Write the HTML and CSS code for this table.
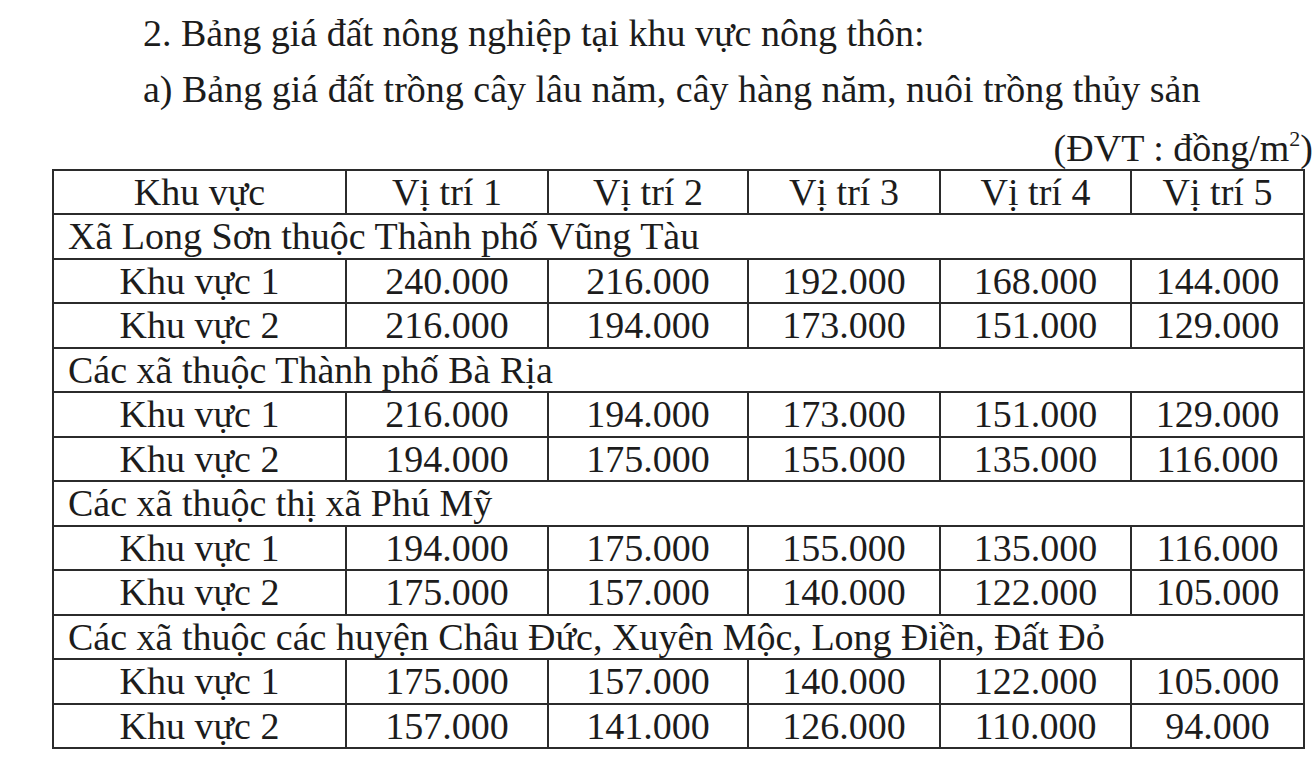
FILE: index.html
```html
<!DOCTYPE html>
<html lang="vi">
<head>
<meta charset="utf-8">
<title>Bảng giá đất nông nghiệp</title>
<link rel="stylesheet" href="styles.css">
</head>
<body>
<div class="sheet">
  <p class="heading">2. Bảng giá đất nông nghiệp tại khu vực nông thôn:</p>
  <p class="heading">a) Bảng giá đất trồng cây lâu năm, cây hàng năm, nuôi trồng thủy sản</p>
  <p class="unit">(ĐVT : đồng/m<sup>2</sup>)</p>
  <table class="price">
    <colgroup>
      <col class="c-area">
      <col class="c1">
      <col class="c2">
      <col class="c3">
      <col class="c4">
      <col class="c5">
    </colgroup>
    <thead>
      <tr class="head-row">
        <th>Khu vực</th><th>Vị trí 1</th><th>Vị trí 2</th><th>Vị trí 3</th><th>Vị trí 4</th><th>Vị trí 5</th>
      </tr>
    </thead>
    <tbody>
      <tr class="group"><td colspan="6">Xã Long Sơn thuộc Thành phố Vũng Tàu</td></tr>
      <tr><td>Khu vực 1</td><td>240.000</td><td>216.000</td><td>192.000</td><td>168.000</td><td>144.000</td></tr>
      <tr><td>Khu vực 2</td><td>216.000</td><td>194.000</td><td>173.000</td><td>151.000</td><td>129.000</td></tr>
      <tr class="group"><td colspan="6">Các xã thuộc Thành phố Bà Rịa</td></tr>
      <tr><td>Khu vực 1</td><td>216.000</td><td>194.000</td><td>173.000</td><td>151.000</td><td>129.000</td></tr>
      <tr><td>Khu vực 2</td><td>194.000</td><td>175.000</td><td>155.000</td><td>135.000</td><td>116.000</td></tr>
      <tr class="group"><td colspan="6">Các xã thuộc thị xã Phú Mỹ</td></tr>
      <tr><td>Khu vực 1</td><td>194.000</td><td>175.000</td><td>155.000</td><td>135.000</td><td>116.000</td></tr>
      <tr><td>Khu vực 2</td><td>175.000</td><td>157.000</td><td>140.000</td><td>122.000</td><td>105.000</td></tr>
      <tr class="group"><td colspan="6">Các xã thuộc các huyện Châu Đức, Xuyên Mộc, Long Điền, Đất Đỏ</td></tr>
      <tr><td>Khu vực 1</td><td>175.000</td><td>157.000</td><td>140.000</td><td>122.000</td><td>105.000</td></tr>
      <tr><td>Khu vực 2</td><td>157.000</td><td>141.000</td><td>126.000</td><td>110.000</td><td>94.000</td></tr>
    </tbody>
  </table>
</div>
</body>
</html>
```

FILE: styles.css
```css
html, body {
  margin: 0;
  padding: 0;
  background: #ffffff;
}

body {
  font-family: "Liberation Serif", "Times New Roman", serif;
  font-size: 38px;
  color: #1c1c1c;
}

.sheet {
  width: 1316px;
  height: 758px;
  padding-top: 5px;
  box-sizing: border-box;
  overflow: hidden;
}

.heading {
  margin: 0;
  padding-left: 143px;
  line-height: 56px;
  white-space: nowrap;
}

.unit {
  margin: 10px 0 0 0;
  padding-right: 3px;
  text-align: right;
  line-height: 43px;
  height: 43px;
  white-space: nowrap;
}

.unit sup {
  font-size: 22px;
  line-height: 0;
  vertical-align: 15px;
}

.price {
  margin: -1px 0 0 52px;
  width: 1251px;
  table-layout: fixed;
  border-collapse: collapse;
}

.c-area { width: 293px; }
.c1 { width: 202px; }
.c2 { width: 200px; }
.c3 { width: 192px; }
.c4 { width: 191px; }
.c5 { width: 173px; }

.price th,
.price td {
  border: 2px solid #2b2b2b;
  padding: 0;
  text-align: center;
  vertical-align: middle;
  font-weight: normal;
  line-height: 42px;
  white-space: nowrap;
}

.head-row {
  height: 43px;
}

.price tbody tr {
  height: 44.5px;
}

.price .group td {
  text-align: left;
  padding-left: 14px;
}
```
